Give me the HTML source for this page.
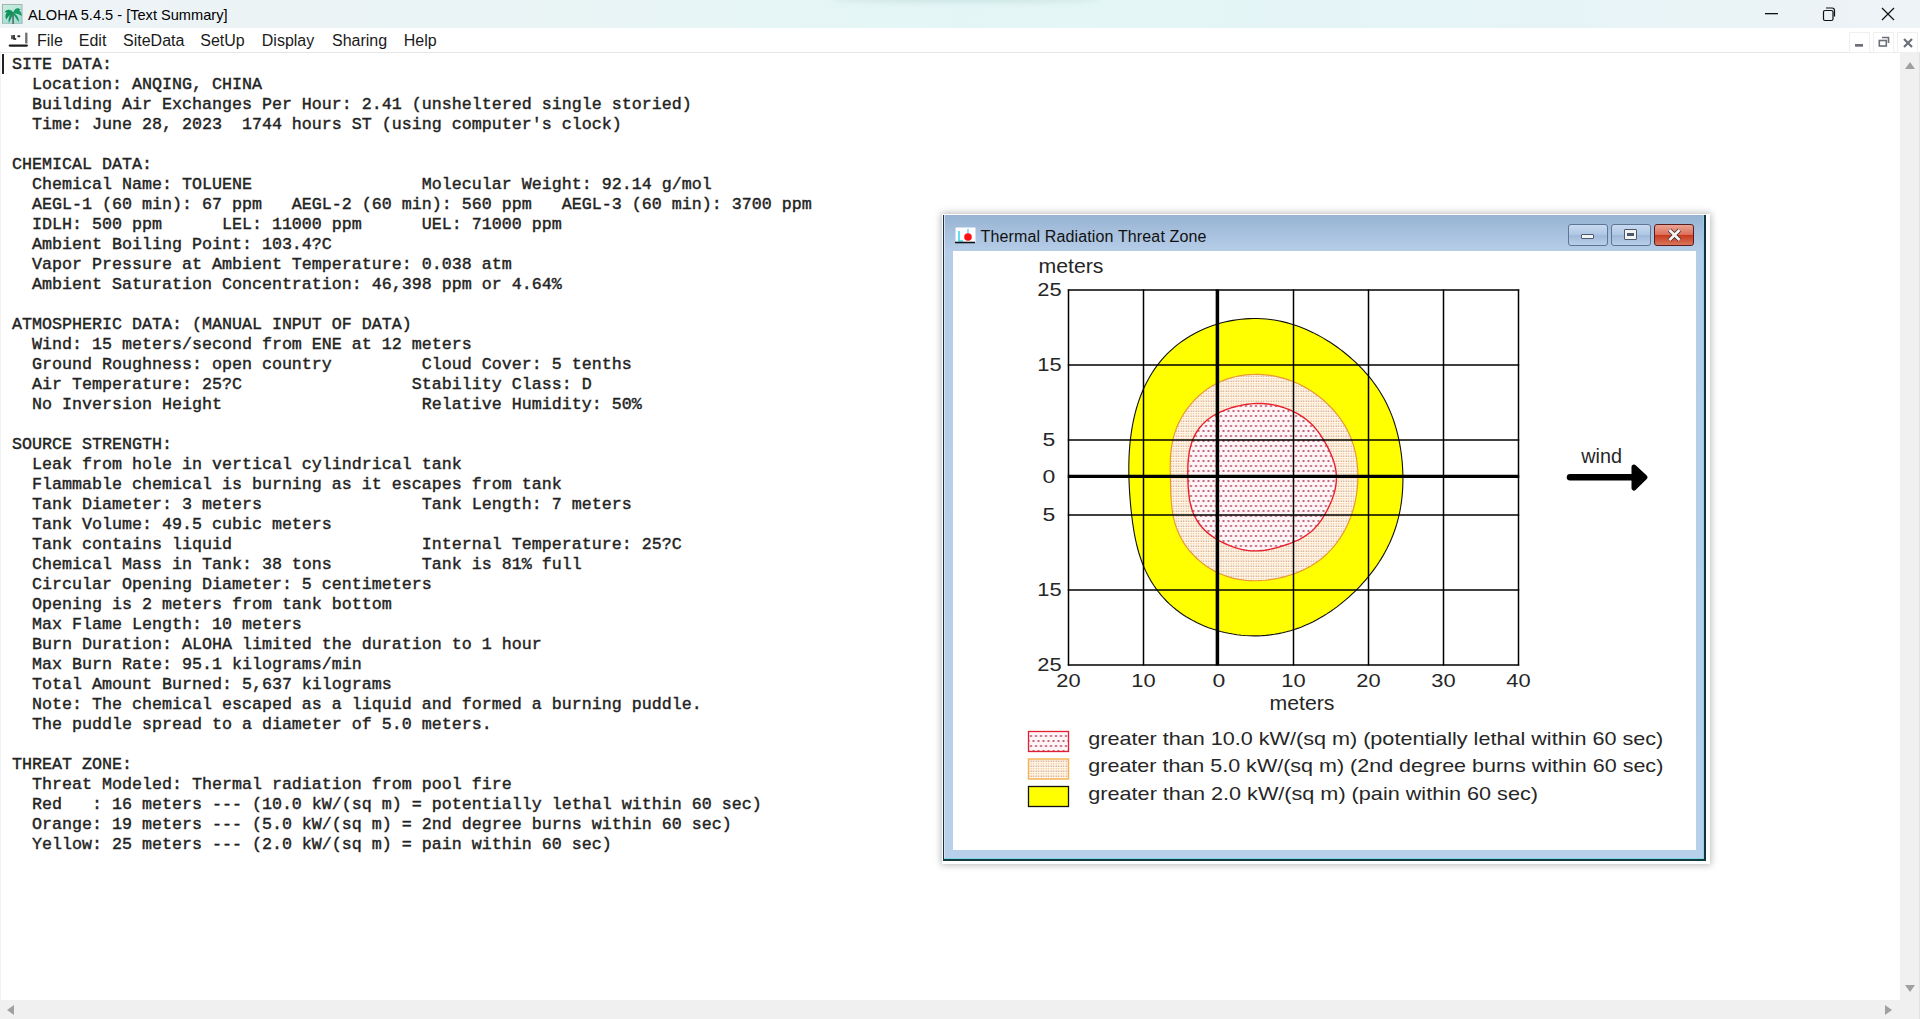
<!DOCTYPE html>
<html><head><meta charset="utf-8"><style>
*{margin:0;padding:0;box-sizing:border-box}
html,body{width:1920px;height:1019px;overflow:hidden;background:#fff;position:relative;font-family:"Liberation Sans",sans-serif}
.abs{position:absolute}
#title{left:0;top:0;width:1920px;height:28px;background:linear-gradient(90deg,#eef3f6 0%,#e9f4f5 30%,#e3f6f5 50%,#e6f4f7 80%,#eef3f6 100%)}
#title .t{left:28px;top:6.5px;font-size:14.6px;color:#000;white-space:pre}
#menubar{left:0;top:28px;width:1920px;height:25px;background:#fff;border-bottom:1px solid #e6e6e6}
#menubar span{position:absolute;top:3.5px;font-size:16px;color:#1a1a1a}
#content{left:0;top:53px;width:1900px;height:947px;background:#fff}
pre{position:absolute;left:12px;top:54.6px;font-family:"Liberation Mono",monospace;font-weight:normal;font-size:16.667px;line-height:20px;color:#222;-webkit-text-stroke:0.4px #222}
#vscroll{left:1900px;top:53px;width:20px;height:947px;background:#f0f0f0}
#hscroll{left:0;top:1000px;width:1920px;height:19px;background:#f0f0f0}
#dlgshadow{left:942px;top:214px;width:768px;height:650px;background:#fff;box-shadow:0 0 7px 1px rgba(0,0,0,0.28);}
#dlg{left:943px;top:215px;width:763px;height:646px;background:linear-gradient(#97b3d3,#b6cde8 36px,#b9d0ea);border-left:1.5px solid #1d2e3c;border-right:2px solid #1d2e3c;border-bottom:2px solid #123c40;box-shadow:inset -1px -1px 0 #7fd8e6, inset 1px 0 0 #d6e4f2}
#dlg .client{position:absolute;left:8.5px;top:36px;width:743px;height:599px;background:#fff}
#dlg .ttl{position:absolute;left:36.5px;top:12.5px;font-size:16px;letter-spacing:0.14px;color:#111;white-space:pre}
.plot{position:absolute;left:953px;top:251px}
</style></head><body>
<div id="title" class="abs">
 <svg class="abs" style="left:2px;top:4px" width="21" height="20" viewBox="0 0 21 20"><defs><linearGradient id="pg" x1="0" y1="0" x2="0.4" y2="1"><stop offset="0" stop-color="#c8f0dc"/><stop offset="1" stop-color="#a4dcd6"/></linearGradient></defs><rect x="0.5" y="0.5" width="19.5" height="19.5" fill="url(#pg)" stroke="#a3b3ad" stroke-width="1"/><rect x="10.2" y="8" width="1.8" height="12" fill="#5d7a70"/><path d="M11,8 C8,4.5 4,5.5 2.5,8.5 L5,8.3 C3,10.5 3,13.5 4.3,15.5 C6,12.5 8,10.5 11,9.5Z M10.5,9 C7.5,11 6,14.5 6.8,19 C8.3,16 9.8,13 11.2,10.2Z" fill="#12905e"/><path d="M11.5,8.2 C12.5,4 16.5,3 18.8,5.8 L17,6.3 C19,8 20,10 19.6,12.3 C17.5,10.2 14.5,9.3 12,9.6Z M12,9.2 C15,11 17,14 17,18 C15.2,16 13.3,13.2 11.5,10.4Z" fill="#159a64"/></svg>
 <div class="abs" style="left:830px;top:-6px;width:270px;height:8px;border-radius:50%;background:rgba(120,160,155,0.22);filter:blur(3px)"></div>
 <div class="abs t">ALOHA 5.4.5 - [Text Summary]</div>
 <svg class="abs" style="left:1764.5px;top:13px" width="13" height="2"><rect width="14" height="1.3" fill="#111"/></svg>
 <svg class="abs" style="left:1821px;top:6px" width="15" height="16" viewBox="0 0 15 16"><path d="M4,4.5 h6.5 a1.5,1.5 0 0 1 1.5,1.5 v7 a1.5,1.5 0 0 1 -1.5,1.5 h-6.5 a1.5,1.5 0 0 1 -1.5,-1.5 v-7 a1.5,1.5 0 0 1 1.5,-1.5z M5,2 h6 a2.5,2.5 0 0 1 2.5,2.5 v6" fill="none" stroke="#111" stroke-width="1.2"/></svg>
 <svg class="abs" style="left:1881px;top:7px" width="14" height="14" viewBox="0 0 14 14"><path d="M1,1 L13,13 M13,1 L1,13" stroke="#111" stroke-width="1.2"/></svg>
</div>
<div id="menubar" class="abs">
 <svg class="abs" style="left:8px;top:4px" width="21" height="20" viewBox="0 0 21 20"><path d="M18.3,0.7 V11.5" stroke="#6e6e6e" stroke-width="2.3" fill="none"/><path d="M1.8,13.6 H18.8" stroke="#1e1e1e" stroke-width="2.3" stroke-linecap="round" fill="none"/><rect x="3.2" y="3.2" width="1.6" height="4" fill="#333"/><path d="M6,3 V7 H8.2" stroke="#111" stroke-width="1.6" fill="none"/><rect x="9.3" y="3.2" width="3" height="2" rx="0.8" fill="#333"/></svg>
 <span style="left:37px">File</span>
 <span style="left:78.8px">Edit</span>
 <span style="left:123px">SiteData</span>
 <span style="left:200.3px">SetUp</span>
 <span style="left:261.8px">Display</span>
 <span style="left:332px">Sharing</span>
 <span style="left:403.8px">Help</span>
 <div class="abs" style="left:1849px;top:3.5px;width:21px;height:21px;border:1px solid #f0f0f0"></div>
 <div class="abs" style="left:1873px;top:3.5px;width:21px;height:21px;border:1px solid #f0f0f0"></div>
 <div class="abs" style="left:1897px;top:3.5px;width:21px;height:21px;border:1px solid #f0f0f0"></div>
 <svg class="abs" style="left:1854.7px;top:15.8px" width="10" height="4"><rect width="8" height="2.7" fill="#6b6f78"/></svg>
 <svg class="abs" style="left:1878px;top:7.5px" width="12" height="12" viewBox="0 0 12 12"><path d="M4,1.5 H10.5 V7" fill="none" stroke="#6b6f78" stroke-width="1.6"/><rect x="1.3" y="4.5" width="7" height="5.5" fill="none" stroke="#6b6f78" stroke-width="1.6"/></svg>
 <svg class="abs" style="left:1903px;top:9.5px" width="10" height="10" viewBox="0 0 10 10"><path d="M1,1 L9,9 M9,1 L1,9" stroke="#6b6f78" stroke-width="2.2"/></svg>
</div>
<div id="content" class="abs"></div>
<div class="abs" style="left:2px;top:54px;width:1.5px;height:20px;background:#222"></div>
<pre>SITE DATA:
  Location: ANQING, CHINA
  Building Air Exchanges Per Hour: 2.41 (unsheltered single storied)
  Time: June 28, 2023  1744 hours ST (using computer&#x27;s clock)

CHEMICAL DATA:
  Chemical Name: TOLUENE                 Molecular Weight: 92.14 g/mol
  AEGL-1 (60 min): 67 ppm   AEGL-2 (60 min): 560 ppm   AEGL-3 (60 min): 3700 ppm
  IDLH: 500 ppm      LEL: 11000 ppm      UEL: 71000 ppm
  Ambient Boiling Point: 103.4?C
  Vapor Pressure at Ambient Temperature: 0.038 atm
  Ambient Saturation Concentration: 46,398 ppm or 4.64%

ATMOSPHERIC DATA: (MANUAL INPUT OF DATA)
  Wind: 15 meters/second from ENE at 12 meters
  Ground Roughness: open country         Cloud Cover: 5 tenths
  Air Temperature: 25?C                 Stability Class: D
  No Inversion Height                    Relative Humidity: 50%

SOURCE STRENGTH:
  Leak from hole in vertical cylindrical tank
  Flammable chemical is burning as it escapes from tank
  Tank Diameter: 3 meters                Tank Length: 7 meters
  Tank Volume: 49.5 cubic meters
  Tank contains liquid                   Internal Temperature: 25?C
  Chemical Mass in Tank: 38 tons         Tank is 81% full
  Circular Opening Diameter: 5 centimeters
  Opening is 2 meters from tank bottom
  Max Flame Length: 10 meters
  Burn Duration: ALOHA limited the duration to 1 hour
  Max Burn Rate: 95.1 kilograms/min
  Total Amount Burned: 5,637 kilograms
  Note: The chemical escaped as a liquid and formed a burning puddle.
  The puddle spread to a diameter of 5.0 meters.

THREAT ZONE:
  Threat Modeled: Thermal radiation from pool fire
  Red   : 16 meters --- (10.0 kW/(sq m) = potentially lethal within 60 sec)
  Orange: 19 meters --- (5.0 kW/(sq m) = 2nd degree burns within 60 sec)
  Yellow: 25 meters --- (2.0 kW/(sq m) = pain within 60 sec)</pre>
<div id="vscroll" class="abs">
 <svg class="abs" style="left:4px;top:7px" width="12" height="10"><path d="M1,9 L6,2 L11,9Z" fill="#a0a0a0"/></svg>
 <svg class="abs" style="left:4px;top:931px" width="12" height="10"><path d="M1,1 L6,8 L11,1Z" fill="#a0a0a0"/></svg>
</div>
<div id="hscroll" class="abs">
 <svg class="abs" style="left:5px;top:4px" width="10" height="12"><path d="M9,1 L2,6 L9,11Z" fill="#a0a0a0"/></svg>
 <svg class="abs" style="left:1884px;top:4px" width="10" height="12"><path d="M1,1 L8,6 L1,11Z" fill="#a0a0a0"/></svg>
</div>
<div class="abs" style="left:1919px;top:53px;width:1px;height:966px;background:#e2e2e2"></div>
<div class="abs" style="left:0;top:53px;width:1px;height:947px;background:#f2f2f2"></div>
<div id="dlgshadow" class="abs"></div>
<div id="dlg" class="abs">
 <div class="client"></div>
 <svg class="abs" style="left:11px;top:12px" width="21" height="17" viewBox="0 0 21 17"><rect x="0.5" y="0.5" width="20" height="15" fill="#fff"/><path d="M4,4 V14 H8" stroke="#3fd8e8" stroke-width="1.6" fill="none"/><path d="M13,2 V6" stroke="#3fc8e8" stroke-width="1.2"/><circle cx="13" cy="10" r="3.8" fill="#ff1010"/><path d="M0,15.5 H20" stroke="#111" stroke-width="1.6"/></svg>
 <div class="ttl">Thermal Radiation Threat Zone</div>
 <div class="abs" style="left:624px;top:9px;width:40px;height:22px;border:1px solid #5e7694;border-radius:3px;background:linear-gradient(#c9daf0,#aec6e4 50%,#9fb9da 51%,#b9cfea)"><div class="abs" style="left:12px;top:9px;width:13px;height:5px;background:#f3f3f3;border:1px solid #4a5a6c;border-radius:1px"></div></div>
 <div class="abs" style="left:667px;top:9px;width:40px;height:22px;border:1px solid #5e7694;border-radius:3px;background:linear-gradient(#c9daf0,#aec6e4 50%,#9fb9da 51%,#b9cfea)"><div class="abs" style="left:12px;top:4px;width:13px;height:11px;background:#f3f3f3;border:1px solid #4a5a6c;border-radius:1px"><div class="abs" style="left:2px;top:3px;width:7px;height:3px;background:#4a5a6c"></div></div></div>
 <div class="abs" style="left:710px;top:9px;width:40px;height:22px;border:1px solid #5a1d1d;border-radius:3px;background:linear-gradient(#eaa595,#db6d58 50%,#c8381c 51%,#d9765c)"><svg class="abs" style="left:12px;top:3px" width="15" height="14" viewBox="0 0 15 14"><path d="M2.5,2 L12.5,12 M12.5,2 L2.5,12" stroke="#3b2a2a" stroke-width="4.4"/><path d="M2.5,2 L12.5,12 M12.5,2 L2.5,12" stroke="#f4f4f4" stroke-width="2.8"/></svg></div>
</div>
<svg class="plot" width="743" height="599" viewBox="953 251 743 599">
<defs>
<pattern id="pr" x="2.5" y="0" width="5" height="10" patternUnits="userSpaceOnUse">
<rect width="5" height="10" fill="#fff5f7"/>
<circle cx="1" cy="1" r="0.95" fill="#a82848"/>
<circle cx="3.5" cy="6" r="0.95" fill="#a82848"/>
</pattern>
<pattern id="po" x="0" y="0" width="2.5" height="5" patternUnits="userSpaceOnUse">
<rect width="2.5" height="5" fill="#fff7ea"/>
<rect x="0.6" y="0.6" width="1.2" height="1.2" fill="#c89070"/>
<rect x="0.6" y="3.1" width="1.2" height="1.2" fill="#f5c08a"/>
</pattern>
</defs>
<path d="M1128.92,477.00 L1128.85,473.51 L1128.81,470.02 L1128.82,466.52 L1128.87,463.01 L1128.96,459.48 L1129.09,455.95 L1129.28,452.40 L1129.52,448.84 L1129.81,445.26 L1130.16,441.67 L1130.56,438.07 L1131.03,434.45 L1131.57,430.81 L1132.17,427.16 L1132.84,423.50 L1133.59,419.83 L1134.42,416.15 L1135.34,412.46 L1136.34,408.77 L1137.43,405.08 L1138.63,401.40 L1139.92,397.72 L1141.32,394.06 L1142.83,390.42 L1144.46,386.81 L1146.20,383.23 L1148.06,379.69 L1150.04,376.19 L1152.15,372.76 L1154.38,369.38 L1156.74,366.08 L1159.22,362.85 L1161.82,359.70 L1164.54,356.65 L1167.38,353.69 L1170.33,350.82 L1173.39,348.07 L1176.55,345.42 L1179.82,342.89 L1183.17,340.47 L1186.62,338.17 L1190.15,335.99 L1193.76,333.93 L1197.44,332.00 L1201.19,330.19 L1205.00,328.51 L1208.87,326.96 L1212.78,325.53 L1216.75,324.23 L1220.75,323.06 L1224.79,322.02 L1228.87,321.12 L1232.97,320.34 L1237.09,319.70 L1241.22,319.20 L1245.38,318.83 L1249.53,318.59 L1253.69,318.50 L1257.85,318.54 L1262.00,318.72 L1266.14,319.03 L1270.26,319.48 L1274.35,320.07 L1278.42,320.79 L1282.45,321.64 L1286.45,322.61 L1290.41,323.71 L1294.32,324.93 L1298.19,326.26 L1302.00,327.70 L1305.77,329.25 L1309.47,330.89 L1313.12,332.63 L1316.72,334.45 L1320.25,336.37 L1323.73,338.36 L1327.14,340.42 L1330.50,342.56 L1333.80,344.76 L1337.04,347.03 L1340.21,349.37 L1343.33,351.76 L1346.39,354.21 L1349.38,356.73 L1352.31,359.30 L1355.18,361.93 L1357.98,364.62 L1360.71,367.37 L1363.37,370.18 L1365.96,373.04 L1368.47,375.97 L1370.90,378.95 L1373.24,381.99 L1375.50,385.09 L1377.68,388.24 L1379.76,391.44 L1381.75,394.70 L1383.64,398.01 L1385.44,401.36 L1387.14,404.75 L1388.74,408.18 L1390.25,411.65 L1391.66,415.15 L1392.98,418.68 L1394.20,422.24 L1395.34,425.82 L1396.38,429.41 L1397.34,433.03 L1398.22,436.65 L1399.01,440.29 L1399.72,443.94 L1400.36,447.59 L1400.93,451.25 L1401.42,454.92 L1401.84,458.59 L1402.20,462.26 L1402.48,465.94 L1402.69,469.63 L1402.84,473.31 L1402.91,477.00 L1402.91,480.69 L1402.84,484.38 L1402.69,488.07 L1402.46,491.76 L1402.15,495.45 L1401.77,499.14 L1401.29,502.82 L1400.73,506.49 L1400.08,510.15 L1399.34,513.80 L1398.50,517.43 L1397.57,521.05 L1396.55,524.65 L1395.43,528.22 L1394.21,531.76 L1392.90,535.28 L1391.49,538.76 L1389.99,542.21 L1388.39,545.62 L1386.70,549.00 L1384.93,552.33 L1383.07,555.62 L1381.12,558.87 L1379.09,562.07 L1376.98,565.23 L1374.79,568.34 L1372.53,571.40 L1370.20,574.42 L1367.79,577.39 L1365.31,580.31 L1362.77,583.19 L1360.16,586.02 L1357.49,588.80 L1354.75,591.53 L1351.94,594.22 L1349.07,596.85 L1346.14,599.43 L1343.14,601.95 L1340.08,604.42 L1336.95,606.83 L1333.76,609.17 L1330.50,611.45 L1327.18,613.65 L1323.79,615.78 L1320.33,617.83 L1316.81,619.79 L1313.23,621.66 L1309.58,623.44 L1305.87,625.12 L1302.11,626.68 L1298.29,628.14 L1294.41,629.48 L1290.49,630.71 L1286.52,631.80 L1282.51,632.78 L1278.46,633.62 L1274.38,634.33 L1270.28,634.91 L1266.15,635.35 L1262.00,635.66 L1257.84,635.84 L1253.67,635.88 L1249.50,635.78 L1245.34,635.55 L1241.17,635.19 L1237.02,634.70 L1232.89,634.08 L1228.77,633.33 L1224.68,632.45 L1220.62,631.44 L1216.59,630.31 L1212.60,629.05 L1208.65,627.67 L1204.74,626.16 L1200.90,624.52 L1197.11,622.75 L1193.38,620.86 L1189.73,618.84 L1186.15,616.70 L1182.66,614.43 L1179.25,612.03 L1175.95,609.51 L1172.74,606.87 L1169.65,604.11 L1166.67,601.24 L1163.81,598.25 L1161.08,595.16 L1158.48,591.97 L1156.02,588.68 L1153.69,585.31 L1151.50,581.86 L1149.45,578.34 L1147.53,574.76 L1145.76,571.13 L1144.11,567.46 L1142.60,563.75 L1141.21,560.02 L1139.93,556.27 L1138.77,552.51 L1137.72,548.75 L1136.76,545.00 L1135.90,541.25 L1135.11,537.52 L1134.40,533.81 L1133.76,530.12 L1133.17,526.45 L1132.64,522.81 L1132.16,519.19 L1131.72,515.59 L1131.31,512.02 L1130.94,508.46 L1130.61,504.93 L1130.30,501.41 L1130.01,497.90 L1129.76,494.41 L1129.53,490.92 L1129.33,487.44 L1129.16,483.96 L1129.03,480.48Z" fill="#ffff00" stroke="#111" stroke-width="1.1"/>
<path d="M1170.34,477.00 L1170.28,474.12 L1170.24,471.23 L1170.22,468.32 L1170.23,465.41 L1170.28,462.47 L1170.37,459.52 L1170.52,456.55 L1170.74,453.57 L1171.04,450.57 L1171.42,447.57 L1171.90,444.56 L1172.48,441.56 L1173.16,438.56 L1173.96,435.57 L1174.86,432.60 L1175.89,429.66 L1177.02,426.74 L1178.27,423.87 L1179.64,421.03 L1181.11,418.23 L1182.69,415.48 L1184.38,412.79 L1186.17,410.15 L1188.07,407.57 L1190.06,405.06 L1192.14,402.61 L1194.32,400.24 L1196.59,397.94 L1198.96,395.72 L1201.40,393.60 L1203.94,391.56 L1206.55,389.62 L1209.24,387.79 L1212.01,386.07 L1214.84,384.45 L1217.75,382.95 L1220.71,381.58 L1223.72,380.32 L1226.78,379.18 L1229.89,378.17 L1233.03,377.29 L1236.20,376.52 L1239.40,375.88 L1242.61,375.35 L1245.84,374.95 L1249.07,374.66 L1252.31,374.48 L1255.55,374.41 L1258.78,374.44 L1262.00,374.59 L1265.21,374.83 L1268.41,375.18 L1271.58,375.63 L1274.74,376.18 L1277.87,376.83 L1280.97,377.57 L1284.04,378.42 L1287.07,379.36 L1290.07,380.39 L1293.02,381.52 L1295.94,382.73 L1298.81,384.04 L1301.63,385.43 L1304.40,386.90 L1307.12,388.45 L1309.78,390.08 L1312.40,391.78 L1314.96,393.56 L1317.46,395.40 L1319.91,397.30 L1322.30,399.27 L1324.63,401.30 L1326.90,403.39 L1329.11,405.53 L1331.26,407.74 L1333.35,410.00 L1335.36,412.32 L1337.31,414.70 L1339.18,417.13 L1340.98,419.62 L1342.69,422.16 L1344.32,424.76 L1345.86,427.41 L1347.31,430.10 L1348.66,432.84 L1349.92,435.63 L1351.08,438.45 L1352.15,441.31 L1353.12,444.20 L1353.99,447.11 L1354.77,450.05 L1355.45,453.01 L1356.05,455.98 L1356.55,458.96 L1356.97,461.96 L1357.31,464.96 L1357.57,467.97 L1357.74,470.98 L1357.84,473.99 L1357.87,477.00 L1357.82,480.01 L1357.69,483.02 L1357.49,486.03 L1357.21,489.03 L1356.86,492.02 L1356.43,495.01 L1355.93,498.00 L1355.34,500.97 L1354.68,503.93 L1353.94,506.87 L1353.11,509.80 L1352.20,512.71 L1351.21,515.61 L1350.14,518.48 L1348.98,521.32 L1347.74,524.14 L1346.42,526.93 L1345.01,529.68 L1343.52,532.40 L1341.93,535.08 L1340.27,537.71 L1338.51,540.30 L1336.67,542.83 L1334.74,545.31 L1332.73,547.73 L1330.62,550.08 L1328.44,552.36 L1326.16,554.56 L1323.81,556.68 L1321.37,558.72 L1318.86,560.67 L1316.27,562.52 L1313.62,564.29 L1310.90,565.95 L1308.13,567.53 L1305.29,569.00 L1302.41,570.38 L1299.48,571.67 L1296.52,572.87 L1293.51,573.98 L1290.47,575.01 L1287.40,575.94 L1284.31,576.80 L1281.19,577.58 L1278.04,578.27 L1274.87,578.89 L1271.68,579.42 L1268.47,579.87 L1265.24,580.23 L1262.00,580.50 L1258.74,580.68 L1255.47,580.75 L1252.20,580.72 L1248.91,580.58 L1245.64,580.32 L1242.36,579.94 L1239.10,579.44 L1235.86,578.81 L1232.64,578.06 L1229.45,577.17 L1226.30,576.16 L1223.19,575.02 L1220.13,573.75 L1217.13,572.36 L1214.18,570.85 L1211.30,569.23 L1208.48,567.49 L1205.74,565.64 L1203.08,563.70 L1200.50,561.65 L1198.00,559.51 L1195.60,557.27 L1193.28,554.94 L1191.07,552.53 L1188.96,550.04 L1186.96,547.46 L1185.08,544.81 L1183.31,542.09 L1181.67,539.31 L1180.15,536.46 L1178.77,533.57 L1177.51,530.62 L1176.38,527.64 L1175.38,524.62 L1174.50,521.58 L1173.74,518.53 L1173.09,515.47 L1172.55,512.42 L1172.10,509.37 L1171.73,506.33 L1171.43,503.31 L1171.20,500.31 L1171.01,497.34 L1170.86,494.39 L1170.74,491.45 L1170.64,488.54 L1170.55,485.64 L1170.47,482.76 L1170.40,479.88Z" fill="url(#po)" stroke="#e89a30" stroke-width="1.2"/>
<path d="M1187.87,477.00 L1187.83,474.09 L1187.83,471.16 L1187.88,468.23 L1187.97,465.27 L1188.13,462.31 L1188.36,459.32 L1188.68,456.32 L1189.10,453.31 L1189.64,450.31 L1190.32,447.31 L1191.14,444.33 L1192.12,441.39 L1193.26,438.51 L1194.58,435.68 L1196.07,432.95 L1197.74,430.31 L1199.57,427.79 L1201.57,425.39 L1203.72,423.13 L1206.01,421.01 L1208.42,419.04 L1210.94,417.21 L1213.54,415.53 L1216.23,414.00 L1218.97,412.59 L1221.75,411.32 L1224.57,410.16 L1227.40,409.10 L1230.26,408.15 L1233.12,407.28 L1235.99,406.51 L1238.87,405.81 L1241.75,405.20 L1244.64,404.68 L1247.53,404.24 L1250.42,403.90 L1253.32,403.65 L1256.22,403.50 L1259.11,403.46 L1262.00,403.53 L1264.88,403.71 L1267.75,403.99 L1270.59,404.39 L1273.42,404.89 L1276.22,405.50 L1279.00,406.20 L1281.74,406.99 L1284.46,407.88 L1287.14,408.86 L1289.78,409.93 L1292.38,411.09 L1294.94,412.34 L1297.46,413.69 L1299.91,415.13 L1302.31,416.67 L1304.64,418.31 L1306.89,420.05 L1309.07,421.89 L1311.15,423.83 L1313.15,425.85 L1315.05,427.96 L1316.87,430.14 L1318.60,432.38 L1320.25,434.68 L1321.82,437.03 L1323.33,439.42 L1324.77,441.85 L1326.16,444.31 L1327.49,446.81 L1328.77,449.34 L1329.99,451.92 L1331.14,454.53 L1332.22,457.20 L1333.21,459.90 L1334.10,462.66 L1334.87,465.46 L1335.49,468.30 L1335.97,471.18 L1336.28,474.08 L1336.42,477.00 L1336.39,479.92 L1336.19,482.84 L1335.82,485.74 L1335.29,488.61 L1334.62,491.44 L1333.82,494.24 L1332.91,497.00 L1331.91,499.71 L1330.82,502.39 L1329.66,505.02 L1328.43,507.63 L1327.14,510.19 L1325.79,512.72 L1324.37,515.22 L1322.87,517.67 L1321.29,520.07 L1319.61,522.42 L1317.83,524.69 L1315.95,526.87 L1313.96,528.96 L1311.87,530.94 L1309.66,532.81 L1307.37,534.55 L1304.99,536.17 L1302.53,537.66 L1300.02,539.04 L1297.45,540.31 L1294.85,541.48 L1292.23,542.57 L1289.58,543.58 L1286.91,544.53 L1284.24,545.43 L1281.54,546.29 L1278.83,547.09 L1276.09,547.85 L1273.33,548.55 L1270.54,549.19 L1267.73,549.75 L1264.88,550.21 L1262.00,550.57 L1259.10,550.81 L1256.18,550.92 L1253.25,550.89 L1250.32,550.72 L1247.40,550.41 L1244.48,549.96 L1241.59,549.37 L1238.72,548.66 L1235.87,547.84 L1233.05,546.90 L1230.25,545.86 L1227.49,544.73 L1224.76,543.50 L1222.05,542.19 L1219.39,540.78 L1216.76,539.27 L1214.18,537.66 L1211.67,535.93 L1209.22,534.09 L1206.87,532.13 L1204.62,530.04 L1202.49,527.83 L1200.50,525.48 L1198.65,523.02 L1196.97,520.45 L1195.45,517.78 L1194.10,515.03 L1192.92,512.20 L1191.90,509.32 L1191.04,506.39 L1190.32,503.44 L1189.73,500.48 L1189.26,497.52 L1188.88,494.55 L1188.58,491.60 L1188.35,488.67 L1188.17,485.74 L1188.03,482.82 L1187.93,479.91Z" fill="url(#pr)" stroke="#e8202a" stroke-width="1.4"/>
<line x1="1068.5" y1="289.5" x2="1068.5" y2="665.5" stroke="#000" stroke-width="1.5"/><line x1="1143.5" y1="289.5" x2="1143.5" y2="665.5" stroke="#000" stroke-width="1.5"/><line x1="1217.4" y1="289.5" x2="1217.4" y2="665.5" stroke="#000" stroke-width="3.5"/><line x1="1293.5" y1="289.5" x2="1293.5" y2="665.5" stroke="#000" stroke-width="1.5"/><line x1="1368.5" y1="289.5" x2="1368.5" y2="665.5" stroke="#000" stroke-width="1.5"/><line x1="1443.5" y1="289.5" x2="1443.5" y2="665.5" stroke="#000" stroke-width="1.5"/><line x1="1518.5" y1="289.5" x2="1518.5" y2="665.5" stroke="#000" stroke-width="1.5"/><line x1="1067.8" y1="290" x2="1519.2" y2="290" stroke="#000" stroke-width="1.5"/><line x1="1067.8" y1="365" x2="1519.2" y2="365" stroke="#000" stroke-width="1.5"/><line x1="1067.8" y1="440" x2="1519.2" y2="440" stroke="#000" stroke-width="1.5"/><line x1="1067.8" y1="476.4" x2="1519.2" y2="476.4" stroke="#000" stroke-width="3.2"/><line x1="1067.8" y1="515" x2="1519.2" y2="515" stroke="#000" stroke-width="1.5"/><line x1="1067.8" y1="590" x2="1519.2" y2="590" stroke="#000" stroke-width="1.5"/><line x1="1067.8" y1="665" x2="1519.2" y2="665" stroke="#000" stroke-width="1.5"/>
<g font-family="Liberation Sans" font-size="19" fill="#262626">
<text x="1038.5" y="273.3" textLength="65" lengthAdjust="spacingAndGlyphs" font-size="19.5">meters</text>
<text x="1037.35" y="295.8" textLength="24.3" lengthAdjust="spacingAndGlyphs">25</text><text x="1037.35" y="370.8" textLength="24.3" lengthAdjust="spacingAndGlyphs">15</text><text x="1042.6" y="445.8" textLength="12.8" lengthAdjust="spacingAndGlyphs">5</text><text x="1042.6" y="483.3" textLength="12.8" lengthAdjust="spacingAndGlyphs">0</text><text x="1042.6" y="520.8" textLength="12.8" lengthAdjust="spacingAndGlyphs">5</text><text x="1037.35" y="595.8" textLength="24.3" lengthAdjust="spacingAndGlyphs">15</text><text x="1037.35" y="670.8" textLength="24.3" lengthAdjust="spacingAndGlyphs">25</text>
<text x="1056.3" y="687" textLength="24.3" lengthAdjust="spacingAndGlyphs">20</text><text x="1131.3" y="687" textLength="24.3" lengthAdjust="spacingAndGlyphs">10</text><text x="1212.4" y="687" textLength="12.8" lengthAdjust="spacingAndGlyphs">0</text><text x="1281.3" y="687" textLength="24.3" lengthAdjust="spacingAndGlyphs">10</text><text x="1356.3" y="687" textLength="24.3" lengthAdjust="spacingAndGlyphs">20</text><text x="1431.3" y="687" textLength="24.3" lengthAdjust="spacingAndGlyphs">30</text><text x="1506.3" y="687" textLength="24.3" lengthAdjust="spacingAndGlyphs">40</text>
<text x="1269.5" y="709.5" textLength="65" lengthAdjust="spacingAndGlyphs" font-size="19.5">meters</text>
<text x="1581.3" y="463" textLength="40.7" lengthAdjust="spacingAndGlyphs" font-size="19.5">wind</text>
</g>
<path d="M1570,477.3 H1636" stroke="#000" stroke-width="6.5" stroke-linecap="round"/>
<path d="M1634,467 L1645,477.3 L1634,488 Z" fill="#000" stroke="#000" stroke-width="5" stroke-linejoin="round"/>
<rect x="1028.5" y="731.5" width="40" height="20" fill="url(#pr)" stroke="#e02030" stroke-width="1.3"/>
<rect x="1028.5" y="759" width="40" height="20" fill="url(#po)" stroke="#f5b050" stroke-width="1.4"/>
<rect x="1028.5" y="786.5" width="40" height="20" fill="#ffff00" stroke="#111" stroke-width="1.3"/>
<g font-family="Liberation Sans" font-size="19" fill="#262626">
<text x="1088.3" y="744.6" textLength="575" lengthAdjust="spacingAndGlyphs">greater than 10.0 kW/(sq m) (potentially lethal within 60 sec)</text>
<text x="1088.3" y="772.1" textLength="575" lengthAdjust="spacingAndGlyphs">greater than 5.0 kW/(sq m) (2nd degree burns within 60 sec)</text>
<text x="1088.3" y="799.6" textLength="449.7" lengthAdjust="spacingAndGlyphs">greater than 2.0 kW/(sq m) (pain within 60 sec)</text>
</g>
</svg>
</body></html>
